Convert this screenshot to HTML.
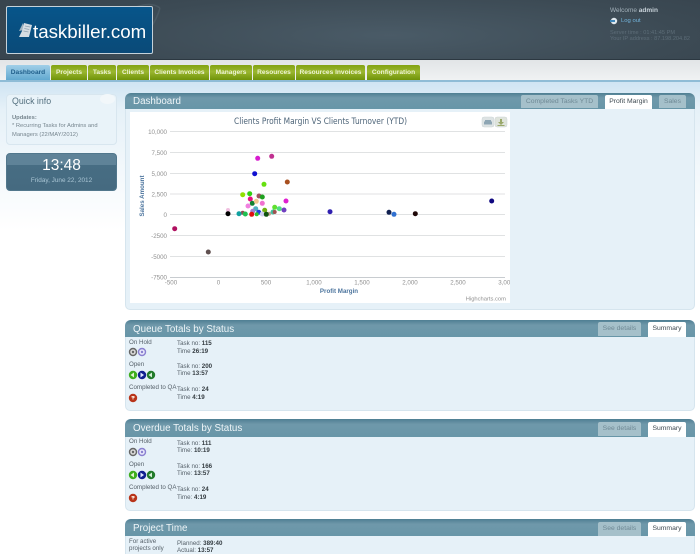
<!DOCTYPE html>
<html><head><meta charset="utf-8"><title>Taskbiller Dashboard</title>
<style>
html,body{margin:0;padding:0;background:#fff}
#w{position:relative;width:700px;height:554px;overflow:hidden;font-family:"Liberation Sans",sans-serif;background:linear-gradient(#cfe4f3 81px,#e6f1f8 110px,#fff 230px);filter:blur(.3px)}
#w div{position:absolute;box-sizing:border-box}
.t{font-size:6.2px;line-height:8px;white-space:nowrap;color:#56616a}
.t b{color:#333b40}
.hdr{left:0;top:0;width:700px;height:60px;background:radial-gradient(ellipse 420px 60px at 390px 35px,#4a5b67,#3c4a54 70%,#38454f);border-bottom:1px solid #2c3841}
.bar{left:0;top:60px;width:700px;height:20px;background:linear-gradient(#e2e5e7,#f0f2f3)}
.line{left:0;top:80px;width:700px;height:2px;background:#8fbcd6}
.nav{top:65px;height:15px;background:linear-gradient(#83a312,#9ab62f 45%,#6f9309);color:#eef4d4;font-weight:bold;font-size:6.6px;line-height:15px;text-align:center;white-space:nowrap;border-radius:2px 2px 0 0}
.p{left:125px;width:570px;background:#e6f1f8;border:1px solid #d6e5ee;border-radius:5px}
.h{left:125px;width:570px;border-radius:6px 6px 0 0;background:linear-gradient(#4f7f93,#6f98aa 30%,#6796a8);color:#eef5f8;font-size:9.8px;padding-left:8px;white-space:nowrap}
.tab{font-size:6.8px;text-align:center;white-space:nowrap;border-radius:2px 2px 0 0}
.off{background:#a5c0ca;color:#6f8995}
.on{background:#fff;color:#3f4a52}
</style></head><body><div id="w">
<div class="hdr"></div>
<div class="bar"></div>
<div class="line"></div>

<svg style="position:absolute;left:120px;top:0" width="60" height="60"><path d="M8 10Q30 0 40 8M40 8Q34 30 10 50" stroke="#56666f" stroke-width="1.500" fill="none" opacity=".5"/></svg>
<div style="left:6px;top:6px;width:147px;height:48px;background:linear-gradient(#07558a,#0a4a78);border:1px solid #c5d2da;border-radius:2px"></div>
<svg style="position:absolute;left:18px;top:21px" width="17" height="18" viewBox="0 0 17 18"><path d="M1 10L5 2l1 7z" fill="#9fb2bf"/><path d="M6 2l8 2-3 12H1l3-6z" fill="#d5dde3"/><path d="M7 5l5 1M6.300 7.500l5 1M5.500 10l5 1" stroke="#8ea2b0" stroke-width=".7"/></svg>
<div style="left:33px;top:20px;width:112px;height:24px;color:#fff;font-size:18.700px;line-height:24px;white-space:nowrap">taskbiller.com</div>

<div class="t" style="left:610px;top:7px;color:#a3b1ba;font-size:6.500px">Welcome <b style="color:#c9d3da">admin</b></div>
<svg style="position:absolute;left:610px;top:17px" width="8" height="8"><circle cx="4" cy="4" r="3.200" fill="#dfe8ee"/><path d="M0 3h5v2H0z" fill="#3f86b8"/></svg>
<div class="t" style="left:621px;top:17px;color:#72b4dc;font-size:5.900px">Log out</div>
<div class="t" style="left:610px;top:29px;color:#5d6d78;font-size:5.600px">Server time : 01:41:45 PM</div>
<div class="t" style="left:610px;top:35px;color:#5d6d78;font-size:5.600px">Your IP address : 87.198.204.82</div>

<div class="nav" style="left:6px;width:44px;background:linear-gradient(#a0cfe8,#62a9d0);color:#21608c">Dashboard</div>
<div class="nav" style="left:51px;width:36px">Projects</div>
<div class="nav" style="left:88px;width:28px">Tasks</div>
<div class="nav" style="left:117px;width:32px">Clients</div>
<div class="nav" style="left:150px;width:59px">Clients Invoices</div>
<div class="nav" style="left:210px;width:42px">Managers</div>
<div class="nav" style="left:253px;width:42px">Resources</div>
<div class="nav" style="left:296px;width:69px">Resources Invoices</div>
<div class="nav" style="left:367px;width:53px">Configuration</div>

<div style="left:6px;top:94px;width:111px;height:51px;background:#e9f3f9;border:1px solid #d8e6ef;border-radius:4px"></div>
<div style="left:100px;top:94px;width:15px;height:10px;background:#f2f7fa;border-radius:50%"></div>
<div class="t" style="left:12px;top:96px;font-size:8.800px;line-height:11px;color:#54707f">Quick info</div>
<div class="t" style="left:12px;top:114px;font-weight:bold;color:#77868f;font-size:5.800px">Updates:</div>
<div class="t" style="left:12px;top:122px;color:#77868f;font-size:5.800px">* Recurring Tasks for Admins and</div>
<div class="t" style="left:12px;top:131px;color:#77868f;font-size:5.800px">Managers (22/MAY/2012)</div>

<div style="left:6px;top:153px;width:111px;height:38px;background:linear-gradient(#5f8398 0,#5f8398 11px,#476d83 11px,#456a80);border-radius:4px;border:1px solid #51778c"></div>
<div style="left:6px;top:156px;width:111px;height:20px;color:#fff;font-size:15.500px;line-height:20px;text-align:center">13:48</div>
<div style="left:6px;top:176px;width:111px;height:9px;color:#a9c5d4;font-size:6.400px;line-height:9px;text-align:center">Friday, June 22, 2012</div>

<!-- Dashboard panel -->
<div class="p" style="top:93px;height:217px"></div>
<div class="h" style="top:93px;height:16px;line-height:17px">Dashboard</div>
<div class="tab off" style="left:521px;top:95px;width:77px;height:13px;line-height:13px">Completed Tasks YTD</div>
<div class="tab on" style="left:605px;top:95px;width:47px;height:14px;line-height:13px">Profit Margin</div>
<div class="tab off" style="left:659px;top:95px;width:27px;height:13px;line-height:13px">Sales</div>

<svg style="position:absolute;left:130px;top:112px" width="380" height="191" viewBox="130 112 380 191">
<rect x="130" y="112" width="380" height="191" fill="#fff"/>
<g stroke="#e0e2e3" stroke-width="1"><path d="M170 131.500H505M170 152.500H505M170 173.500H505M170 194H505M170 214.500H505M170 235.500H505M170 256.500H505"/><path d="M170 277.500H505" stroke="#c8ccd0"/></g>
<text x="234" y="124" font-family="DejaVu Sans,sans-serif" font-size="8.400" fill="#4d6478" textLength="173" lengthAdjust="spacingAndGlyphs">Clients Profit Margin VS Clients Turnover (YTD)</text>
<rect x="482" y="117" width="12" height="10" rx="2" fill="#dde3e4" stroke="#cdd5d6" stroke-width=".5"/>
<rect x="495" y="117" width="12" height="10" rx="2" fill="#dfe4dc" stroke="#cdd5d6" stroke-width=".5"/>
<path d="M485 120h6v1.500h1v3h-8v-3h1z" fill="#8ea6b4"/>
<path d="M500 119h2v3h2l-3 3-3-3h2z" fill="#9aa86a"/><path d="M497.500 125h7v1h-7z" fill="#9aa86a"/>
<g font-size="6.200" fill="#909090" text-anchor="end" font-family="Liberation Sans,sans-serif">
<text x="167" y="134">10,000</text><text x="167" y="155">7,500</text><text x="167" y="176">5,000</text><text x="167" y="196.500">2,500</text><text x="167" y="217">0</text><text x="167" y="238">-2500</text><text x="167" y="259">-5000</text><text x="167" y="279.500">-7500</text></g>
<g font-size="6.200" fill="#909090" text-anchor="middle" font-family="Liberation Sans,sans-serif">
<text x="171" y="284.500">-500</text><text x="218.500" y="284.500">0</text><text x="266" y="284.500">500</text><text x="314" y="284.500">1,000</text><text x="362" y="284.500">1,500</text><text x="410" y="284.500">2,000</text><text x="458" y="284.500">2,500</text><text x="506" y="284.500">3,000</text></g>
<text x="339" y="293" font-size="6.200" font-weight="bold" fill="#4d759e" text-anchor="middle" font-family="Liberation Sans,sans-serif">Profit Margin</text>
<text transform="translate(144,196) rotate(-90)" font-size="6.200" font-weight="bold" fill="#4d759e" text-anchor="middle" font-family="Liberation Sans,sans-serif">Sales Amount</text>
<text x="506" y="300.500" font-size="5.800" fill="#909090" text-anchor="end" font-family="Liberation Sans,sans-serif">Highcharts.com</text>
<g>
<circle cx="257.700" cy="158.300" r="2.500" fill="#d81ccf"/>
<circle cx="271.700" cy="156.300" r="2.500" fill="#c03090"/>
<circle cx="254.700" cy="173.700" r="2.500" fill="#1010d0"/>
<circle cx="264" cy="184.300" r="2.500" fill="#66e010"/>
<circle cx="287.300" cy="182" r="2.500" fill="#a85020"/>
<circle cx="242.700" cy="194.700" r="2.500" fill="#90e000"/>
<circle cx="249.700" cy="193.700" r="2.500" fill="#30d010"/>
<circle cx="259" cy="196" r="2.500" fill="#a05060"/>
<circle cx="262.300" cy="197" r="2.500" fill="#20a020"/>
<circle cx="250.300" cy="199" r="2.500" fill="#e81080"/>
<circle cx="286" cy="201" r="2.500" fill="#e020d0"/>
<circle cx="252.300" cy="203.300" r="2.500" fill="#108030"/>
<circle cx="256.300" cy="201.300" r="2.500" fill="#f0c890"/>
<circle cx="262.300" cy="203.300" r="2.500" fill="#f070d0"/>
<circle cx="248" cy="206" r="2.500" fill="#f080e0"/>
<circle cx="255.700" cy="208.700" r="2.500" fill="#50b0c0"/>
<circle cx="274.700" cy="207.300" r="2.500" fill="#60e030"/>
<circle cx="279.300" cy="208.700" r="2.500" fill="#50e080"/>
<circle cx="284" cy="210" r="2.500" fill="#7040c0"/>
<circle cx="264.700" cy="210.300" r="2.500" fill="#70b010"/>
<circle cx="252.700" cy="211.300" r="2.500" fill="#a080d0"/>
<circle cx="258.700" cy="212.300" r="2.500" fill="#2040e0"/>
<circle cx="273" cy="212" r="2.500" fill="#40c0a0"/>
<circle cx="274.700" cy="212" r="2" fill="#a05050"/>
<circle cx="242.700" cy="212.700" r="2" fill="#905050"/>
<circle cx="228" cy="210" r="2" fill="#f0c0e0"/>
<circle cx="228" cy="213.700" r="2.500" fill="#000"/>
<circle cx="239" cy="213.700" r="2.500" fill="#10a0a0"/>
<circle cx="245.300" cy="214" r="2.500" fill="#20c050"/>
<circle cx="251.700" cy="214.300" r="2.500" fill="#e01010"/>
<circle cx="262.300" cy="214" r="2.500" fill="#d0d0f0"/>
<circle cx="256.700" cy="214.300" r="2" fill="#30c030"/>
<circle cx="269" cy="213.700" r="2" fill="#c0a090"/>
<circle cx="266.300" cy="214.300" r="2.500" fill="#105010"/>
<circle cx="174.700" cy="228.700" r="2.500" fill="#b01060"/>
<circle cx="208.300" cy="252" r="2.500" fill="#605050"/>
<circle cx="330" cy="211.700" r="2.500" fill="#3020b0"/>
<circle cx="389" cy="212.300" r="2.500" fill="#102050"/>
<circle cx="394" cy="214.300" r="2.500" fill="#3070d0"/>
<circle cx="415.300" cy="213.700" r="2.500" fill="#200808"/>
<circle cx="491.700" cy="201" r="2.500" fill="#100880"/>
</g>
</svg>

<!-- Queue -->
<div class="p" style="top:320px;height:91px"></div>
<div class="h" style="top:320px;height:17px;line-height:19px">Queue Totals by Status</div>
<div class="tab off" style="left:598px;top:322px;width:43px;height:14px;line-height:14px">See details</div>
<div class="tab on" style="left:648px;top:322px;width:38px;height:15px;line-height:14px">Summary</div>
<div class="t" style="left:129px;top:339px">On Hold</div>
<div class="t" style="left:129px;top:361px">Open</div>
<div class="t" style="left:129px;top:384px">Completed to QA</div>
<div class="t" style="left:177px;top:340px">Task no: <b>115</b></div>
<div class="t" style="left:177px;top:348px">Time <b>26:19</b></div>
<div class="t" style="left:177px;top:363px">Task no: <b>200</b></div>
<div class="t" style="left:177px;top:370px">Time <b>13:57</b></div>
<div class="t" style="left:177px;top:386px">Task no: <b>24</b></div>
<div class="t" style="left:177px;top:394px">Time <b>4:19</b></div>
<svg style="position:absolute;left:125px;top:345px" width="40" height="60">
<circle cx="8" cy="7" r="3.500" fill="#d8d8d8" stroke="#666" stroke-width="1.400"/><circle cx="8" cy="7" r="1.200" fill="#666"/>
<circle cx="17" cy="7" r="3.500" fill="#e6e6fa" stroke="#8a80d0" stroke-width="1.400"/><circle cx="17" cy="7" r="1.200" fill="#8a80d0"/>
<circle cx="8" cy="30" r="4.200" fill="#3fae1e"/><path d="M5.500 30l3.500-2.500v5z" fill="#e0f5d0"/>
<circle cx="17" cy="30" r="4.200" fill="#101f90"/><path d="M15.500 27.500l3.500 2.500-3.500 2.500z" fill="#dfe6ff"/>
<circle cx="26" cy="30" r="4.200" fill="#217a2a"/><path d="M23.500 30l3.500-2.500v5z" fill="#d5f0d5"/>
<circle cx="8" cy="53" r="4.200" fill="#b8341a"/><path d="M6.500 51h3v2h-1v1.500h-1V52.500h-1z" fill="#f5dccb"/>
</svg>

<!-- Overdue -->
<div class="p" style="top:419px;height:92px"></div>
<div class="h" style="top:419px;height:18px;line-height:19px">Overdue Totals by Status</div>
<div class="tab off" style="left:598px;top:422px;width:43px;height:14px;line-height:14px">See details</div>
<div class="tab on" style="left:648px;top:422px;width:38px;height:15px;line-height:14px">Summary</div>
<div class="t" style="left:129px;top:438px">On Hold</div>
<div class="t" style="left:129px;top:461px">Open</div>
<div class="t" style="left:129px;top:484px">Completed to QA</div>
<div class="t" style="left:177px;top:440px">Task no: <b>111</b></div>
<div class="t" style="left:177px;top:447px">Time: <b>10:19</b></div>
<div class="t" style="left:177px;top:463px">Task no: <b>166</b></div>
<div class="t" style="left:177px;top:470px">Time: <b>13:57</b></div>
<div class="t" style="left:177px;top:486px">Task no: <b>24</b></div>
<div class="t" style="left:177px;top:494px">Time: <b>4:19</b></div>
<svg style="position:absolute;left:125px;top:445px" width="40" height="60">
<circle cx="8" cy="7" r="3.500" fill="#d8d8d8" stroke="#666" stroke-width="1.400"/><circle cx="8" cy="7" r="1.200" fill="#666"/>
<circle cx="17" cy="7" r="3.500" fill="#e6e6fa" stroke="#8a80d0" stroke-width="1.400"/><circle cx="17" cy="7" r="1.200" fill="#8a80d0"/>
<circle cx="8" cy="30" r="4.200" fill="#3fae1e"/><path d="M5.500 30l3.500-2.500v5z" fill="#e0f5d0"/>
<circle cx="17" cy="30" r="4.200" fill="#101f90"/><path d="M15.500 27.500l3.500 2.500-3.500 2.500z" fill="#dfe6ff"/>
<circle cx="26" cy="30" r="4.200" fill="#217a2a"/><path d="M23.500 30l3.500-2.500v5z" fill="#d5f0d5"/>
<circle cx="8" cy="53" r="4.200" fill="#b8341a"/><path d="M6.500 51h3v2h-1v1.500h-1V52.500h-1z" fill="#f5dccb"/>
</svg>

<!-- Project -->
<div class="p" style="top:519px;height:50px"></div>
<div class="h" style="top:519px;height:17px;line-height:19px">Project Time</div>
<div class="tab off" style="left:598px;top:522px;width:43px;height:14px;line-height:14px">See details</div>
<div class="tab on" style="left:648px;top:522px;width:38px;height:15px;line-height:14px">Summary</div>
<div class="t" style="left:129px;top:538px">For active</div>
<div class="t" style="left:129px;top:545px">projects only</div>
<div class="t" style="left:177px;top:540px">Planned: <b>389:40</b></div>
<div class="t" style="left:177px;top:547px">Actual: <b>13:57</b></div>
</div></body></html>
